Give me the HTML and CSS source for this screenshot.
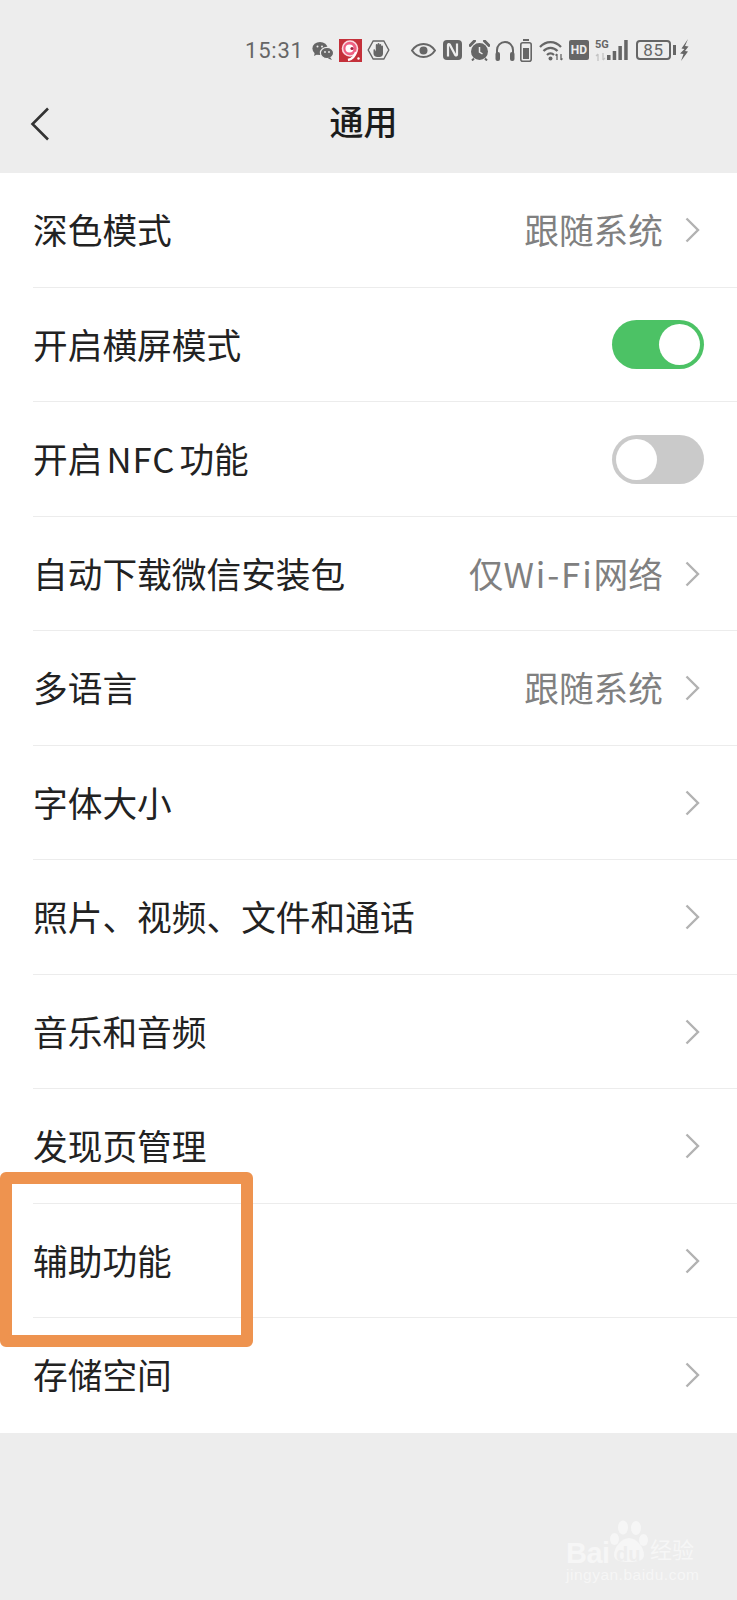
FILE: index.html
```html
<!DOCTYPE html>
<html lang="zh-CN">
<head>
  <meta charset="UTF-8" />
  <meta name="viewport" content="width=device-width, initial-scale=1.0"/>
  <title>通用</title>
  <link rel="stylesheet" href="styles.css">
</head>
<body>
  <div class="page">
    <div class="status-bar">
      <span class="time">15:31</span>
      <!-- wechat -->
      <svg class="ic ic-wechat" viewBox="0 0 22 19"><ellipse cx="8" cy="7.5" rx="7.6" ry="6.6" fill="#666"/><path d="M3 11l-1 4 4-2z" fill="#666"/><ellipse cx="15" cy="12" rx="6.6" ry="5.6" fill="#666" stroke="#ededed" stroke-width="1.2"/><path d="M18 16l2 3-4-1.5z" fill="#666"/><circle cx="5.5" cy="5.5" r="1" fill="#ededed"/><circle cx="10" cy="5.5" r="1" fill="#ededed"/><circle cx="13" cy="11" r=".9" fill="#ededed"/><circle cx="17" cy="11" r=".9" fill="#ededed"/></svg>
      <!-- red app -->
      <svg class="ic ic-app" viewBox="0 0 23 23"><rect width="23" height="23" fill="#c4303a"/><circle cx="11" cy="9.5" r="7.5" fill="#ef5f82" stroke="#fbdbe2" stroke-width="1.6"/><circle cx="10.5" cy="9.5" r="4" fill="#fff"/><circle cx="13" cy="9.5" r="1.6" fill="#a01c3c"/><path d="M17 13c-1 4-4 7-8 8" fill="none" stroke="#fff" stroke-width="2.4"/><circle cx="19.5" cy="19.5" r="1.2" fill="#fff"/></svg>
      <!-- hand in hexagon -->
      <svg class="ic ic-hand" viewBox="0 0 23 20"><path d="M6.2 1h10.6l5 9-5 9H6.2l-5-9z" fill="none" stroke="#666" stroke-width="1.4"/><path d="M6.5 10v3.5c0 2 1.7 3.5 4 3.5h2c2.3 0 3.5-1.5 3.5-3.5V6.5a.9.9 0 0 0-1.8 0V9.5V5a.9.9 0 0 0-1.8 0v4.5V4a.9.9 0 0 0-1.8 0v5.5V5a.9.9 0 0 0-1.8 0v6.5L7.8 9.5a.8.8 0 0 0-1.3.5z" fill="#666"/></svg>
      <!-- eye -->
      <svg class="ic ic-eye" viewBox="0 0 25 15"><path d="M1 7.5C4 3 8 1 12.5 1S21 3 24 7.5C21 12 17 14 12.5 14S4 12 1 7.5z" fill="none" stroke="#666" stroke-width="2"/><circle cx="12.5" cy="7.5" r="4" fill="#666"/></svg>
      <!-- nfc -->
      <svg class="ic ic-nfc" viewBox="0 0 19 20"><path d="M4 0h11a4 4 0 0 1 4 4v12a4 4 0 0 1-4 4H4a4 4 0 0 1-4-4V4a4 4 0 0 1 4-4z" fill="#666"/><path d="M5 16.5V5c0-1 1-1.3 1.7-.5l5.6 10.5c.7.8 1.7.5 1.7-.5V3.5" fill="none" stroke="#ededed" stroke-width="2.2"/></svg>
      <!-- alarm -->
      <svg class="ic ic-alarm" viewBox="0 0 21 21"><circle cx="10.5" cy="11.5" r="8.5" fill="#666"/><path d="M1 5.5L5.5 1M20 5.5L15.5 1" stroke="#666" stroke-width="3" stroke-linecap="round"/><path d="M10.5 7v5l3 2" fill="none" stroke="#ededed" stroke-width="1.5"/><path d="M5 18.5L3 20.5M16 18.5l2 2" stroke="#666" stroke-width="2"/></svg>
      <!-- headphones -->
      <svg class="ic ic-phones" viewBox="0 0 20 21"><path d="M2 14V10a8 8 0 0 1 16 0v4" fill="none" stroke="#666" stroke-width="2"/><rect x="0.5" y="12" width="4.5" height="9" rx="2" fill="#666"/><rect x="15" y="12" width="4.5" height="9" rx="2" fill="#666"/></svg>
      <!-- battery saver -->
      <svg class="ic ic-saver" viewBox="0 0 12 23"><rect x="3" y="0" width="6" height="2" fill="#666"/><rect x=".8" y="3.8" width="10.4" height="18.4" rx="2" fill="none" stroke="#666" stroke-width="1.6"/><rect x="3" y="9" width="6" height="11" fill="#666"/></svg>
      <!-- wifi -->
      <svg class="ic ic-wifi" viewBox="0 0 25 21"><path d="M1 7c6-6.5 15-6.5 21 0M4.5 11c4-4.3 10-4.3 14 0M8 15c2-2.2 5-2.2 7 0" fill="none" stroke="#666" stroke-width="2.2"/><circle cx="11.5" cy="18.5" r="2" fill="#666"/><path d="M18 20v-6M16.5 15.5l1.5-1.5M22 14v6M23.5 18.5L22 20" fill="none" stroke="#666" stroke-width="1.3"/></svg>
      <span class="hd">HD</span>
      <span class="net">
        <span class="net-5g">5G</span>
        <svg class="ic-arrows" viewBox="0 0 11 8"><path d="M3 8V1M1 3l2-2M8 0v7M10 5L8 7" fill="none" stroke="#c4c4c4" stroke-width="1.3"/></svg>
      </span>
      <svg class="ic ic-signal" viewBox="0 0 21 21"><rect x="0" y="15" width="3.5" height="5" fill="#666"/><rect x="5.7" y="11" width="3.5" height="9" fill="#666"/><rect x="11.4" y="6" width="3.5" height="14" fill="#666"/><rect x="17.2" y="0" width="3.5" height="20" fill="#666"/></svg>
      <span class="battery">85</span>
      <span class="battery-nub"></span>
      <svg class="ic ic-bolt" viewBox="0 0 9 22"><path d="M8 0L1.5 9.5l3 .5L0 14.5l3.5.5L1 22l7-9.5-3-.5L8.5 7.5 5 7z" fill="#666"/></svg>
    </div>

    <div class="nav-bar">
      <svg class="back" viewBox="0 0 20 34"><path d="M18 1.5L2.5 17 18 32.5" fill="none" stroke="#333" stroke-width="2.6"/></svg>
      <h1 class="nav-title">通用</h1>
    </div>

    <div class="list">
      <div class="row">
        <span class="row-label">深色模式</span>
        <span class="row-value">跟随系统</span>
        <svg class="chevron" viewBox="0 0 15 26"><path d="M1.5 1.5L13 13 1.5 24.5" fill="none" stroke="#b2b2b2" stroke-width="2.4"/></svg>
      </div>
      <div class="row">
        <span class="row-label">开启横屏模式</span>
        <span class="switch on"><span class="knob"></span></span>
      </div>
      <div class="row">
        <span class="row-label">开启<span class="latin">NFC</span>功能</span>
        <span class="switch"><span class="knob"></span></span>
      </div>
      <div class="row">
        <span class="row-label">自动下载微信安装包</span>
        <span class="row-value">仅<span class="wifi-text">Wi-Fi</span>网络</span>
        <svg class="chevron" viewBox="0 0 15 26"><path d="M1.5 1.5L13 13 1.5 24.5" fill="none" stroke="#b2b2b2" stroke-width="2.4"/></svg>
      </div>
      <div class="row">
        <span class="row-label">多语言</span>
        <span class="row-value">跟随系统</span>
        <svg class="chevron" viewBox="0 0 15 26"><path d="M1.5 1.5L13 13 1.5 24.5" fill="none" stroke="#b2b2b2" stroke-width="2.4"/></svg>
      </div>
      <div class="row">
        <span class="row-label">字体大小</span>
        <svg class="chevron" viewBox="0 0 15 26"><path d="M1.5 1.5L13 13 1.5 24.5" fill="none" stroke="#b2b2b2" stroke-width="2.4"/></svg>
      </div>
      <div class="row">
        <span class="row-label">照片、视频、文件和通话</span>
        <svg class="chevron" viewBox="0 0 15 26"><path d="M1.5 1.5L13 13 1.5 24.5" fill="none" stroke="#b2b2b2" stroke-width="2.4"/></svg>
      </div>
      <div class="row">
        <span class="row-label">音乐和音频</span>
        <svg class="chevron" viewBox="0 0 15 26"><path d="M1.5 1.5L13 13 1.5 24.5" fill="none" stroke="#b2b2b2" stroke-width="2.4"/></svg>
      </div>
      <div class="row">
        <span class="row-label">发现页管理</span>
        <svg class="chevron" viewBox="0 0 15 26"><path d="M1.5 1.5L13 13 1.5 24.5" fill="none" stroke="#b2b2b2" stroke-width="2.4"/></svg>
      </div>
      <div class="row">
        <span class="row-label">辅助功能</span>
        <svg class="chevron" viewBox="0 0 15 26"><path d="M1.5 1.5L13 13 1.5 24.5" fill="none" stroke="#b2b2b2" stroke-width="2.4"/></svg>
      </div>
      <div class="row">
        <span class="row-label">存储空间</span>
        <svg class="chevron" viewBox="0 0 15 26"><path d="M1.5 1.5L13 13 1.5 24.5" fill="none" stroke="#b2b2b2" stroke-width="2.4"/></svg>
      </div>
    </div>

    <!-- annotation box drawn over the list -->
    <div class="highlight"></div>

    <div class="watermark">
      <div class="wm-top">
        <span class="wm-bai">Bai</span>
        <svg class="wm-paw" viewBox="0 0 38 42"><ellipse cx="13" cy="7.5" rx="5" ry="7" fill="#f6f6f6"/><ellipse cx="26" cy="8" rx="5" ry="7" fill="#f6f6f6"/><ellipse cx="4.5" cy="19" rx="4.5" ry="6" fill="#f6f6f6"/><ellipse cx="33.5" cy="20" rx="4.5" ry="6" fill="#f6f6f6"/><path d="M19 18c7 0 15 9 15 17 0 5-5 7-15 7S4 40 4 35c0-8 8-17 15-17z" fill="#f6f6f6"/></svg>
        <span class="wm-du">du</span>
        <span class="wm-cn">经验</span>
      </div>
      <div class="wm-url">jingyan.baidu.com</div>
    </div>
  </div>
</body>
</html>
```

FILE: styles.css
```css
html, body {
  margin: 0;
  padding: 0;
}

body {
  font-family: "Noto Sans CJK SC", "Noto Sans", sans-serif;
  background-color: #ededed;
}

.page {
  position: relative;
  width: 737px;
  height: 1600px;
  overflow: hidden;
  background-color: #ededed;
}

/* status bar */
.status-bar {
  display: flex;
  align-items: center;
  height: 100px;
  padding: 0 0 0 245px;
  box-sizing: border-box;
  color: #666;
}

.time {
  font-family: Roboto, sans-serif;
  font-size: 22px;
  letter-spacing: 0.8px;
  width: 67px;
}

.ic {
  display: block;
  flex: none;
}

.ic-wechat { width: 22px; height: 19px; margin-right: 5px; }
.ic-app { width: 23px; height: 23px; margin-right: 5px; }
.ic-hand { width: 23px; height: 20px; margin-right: 21px; }
.ic-eye { width: 25px; height: 15px; margin-right: 7px; }
.ic-nfc { width: 19px; height: 20px; margin-right: 7px; }
.ic-alarm { width: 21px; height: 21px; margin-right: 5px; }
.ic-phones { width: 20px; height: 21px; margin-right: 5px; }
.ic-saver { width: 12px; height: 23px; margin-right: 7px; }
.ic-wifi { width: 25px; height: 21px; margin-right: 5px; }
.ic-signal { width: 21px; height: 21px; margin: 0 8px 0 0; }
.ic-bolt { width: 9px; height: 22px; margin-left: 4px; }

.hd {
  width: 20px;
  height: 20px;
  margin-right: 6px;
  border-radius: 2px;
  background-color: #666;
  color: #ededed;
  font-family: Roboto, sans-serif;
  font-size: 12px;
  font-weight: 700;
  line-height: 20px;
  text-align: center;
}

.net {
  display: flex;
  flex-direction: column;
  width: 12px;
  height: 22px;
  justify-content: space-between;
}

.net-5g {
  font-family: Roboto, sans-serif;
  font-size: 11px;
  font-weight: 700;
  line-height: 11px;
  white-space: nowrap;
}

.ic-arrows {
  display: block;
  width: 11px;
  height: 8px;
}

.battery {
  width: 35px;
  height: 20px;
  box-sizing: border-box;
  border: 2px solid #666;
  border-radius: 4px;
  font-family: Roboto, sans-serif;
  font-size: 17px;
  line-height: 16px;
  letter-spacing: 0.6px;
  text-align: center;
}

.battery-nub {
  width: 3px;
  height: 10px;
  margin-left: 2px;
  background-color: #666;
}

/* nav bar */
.nav-bar {
  position: relative;
  display: flex;
  align-items: center;
  justify-content: center;
  height: 73px;
}

.nav-bar .back {
  position: absolute;
  left: 30px;
  top: 7px;
  width: 20px;
  height: 34px;
}

.nav-title {
  margin: 0 10px 32px 0;
  font-size: 34px;
  line-height: 41px;
  font-weight: 500;
  color: #1c1c1c;
}

/* list */
.list {
  background-color: #fff;
}

.row {
  position: relative;
  display: flex;
  align-items: center;
  height: 114.5px;
  box-sizing: border-box;
  padding: 0 37px 2px 33px;
}

.row::after {
  content: "";
  position: absolute;
  left: 33px;
  right: 0;
  bottom: 0;
  height: 1px;
  background-color: #ececec;
}

.row:last-child::after {
  display: none;
}

.row-label {
  flex: 1;
  font-size: 34.7px;
  color: #222;
  white-space: nowrap;
}

.latin {
  margin: 0 4px 0 4px;
  letter-spacing: 1px;
}

.row-value {
  font-size: 34.7px;
  color: #808080;
  margin-right: 22px;
  white-space: nowrap;
}

.wifi-text {
  letter-spacing: 1.9px;
}

.chevron {
  display: block;
  width: 15px;
  height: 26px;
  margin-top: 2px;
}

.switch {
  display: flex;
  align-items: center;
  width: 92px;
  height: 49px;
  margin: 2px -4px 0 0;
  padding: 0 4px;
  box-sizing: border-box;
  border-radius: 25px;
  background-color: #cacaca;
}

.switch.on {
  justify-content: flex-end;
  background-color: #4cc265;
}

.knob {
  width: 41px;
  height: 41px;
  border-radius: 50%;
  background-color: #fff;
}

/* orange annotation */
.highlight {
  position: absolute;
  left: 0;
  top: 1172px;
  width: 253px;
  height: 175px;
  box-sizing: border-box;
  border: 12px solid #ee934f;
  border-radius: 6px;
}

/* watermark */
.watermark {
  position: absolute;
  left: 566px;
  top: 1520px;
  width: 135px;
  color: #f6f6f6;
}

.wm-top {
  position: relative;
  display: flex;
  align-items: flex-end;
  height: 44px;
}

.wm-bai {
  font-family: "Liberation Sans", sans-serif;
  font-size: 29px;
  font-weight: 700;
  line-height: 28px;
  letter-spacing: -0.5px;
  width: 44px;
  margin-bottom: -3px;
}

.wm-paw {
  width: 38px;
  height: 42px;
  margin-bottom: 2px;
  flex: none;
}

.wm-du {
  position: absolute;
  left: 50px;
  top: 25px;
  font-family: "Liberation Sans", sans-serif;
  font-size: 20px;
  font-weight: 700;
  line-height: 18px;
  color: #ededed;
}

.wm-cn {
  font-size: 22px;
  line-height: 26px;
  margin: 0 0 3px 2px;
  white-space: nowrap;
}

.wm-url {
  margin-top: 3px;
  font-family: "Liberation Sans", sans-serif;
  font-size: 15.5px;
  line-height: 16px;
  letter-spacing: 0.5px;
  white-space: nowrap;
}
```
